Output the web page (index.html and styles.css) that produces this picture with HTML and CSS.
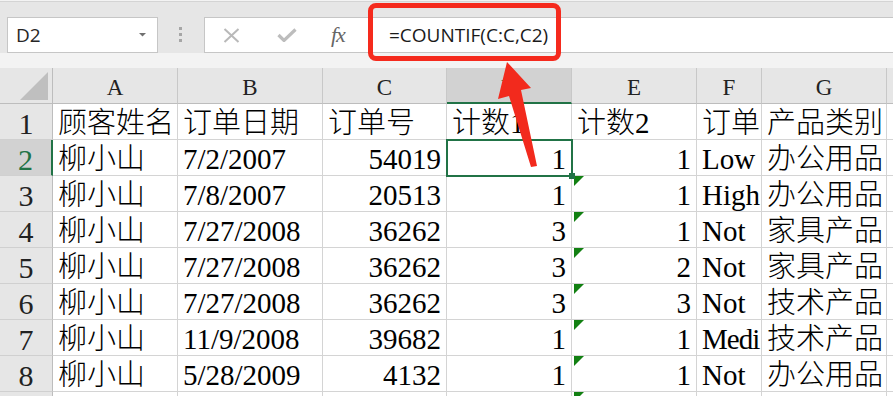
FILE: index.html
```html
<!DOCTYPE html>
<html lang="zh-CN">
<head>
<meta charset="utf-8">
<title>COUNTIF</title>
<link rel="stylesheet" href="styles.css">
</head>
<body>
<div class="app">
  <div class="topband"></div>
  <div class="fbar">
    <div class="namebox"><span>D2</span>
      <svg width="8" height="4" viewBox="0 0 8 4"><path d="M0 0H7L3.5 3.5Z" fill="#707070"/></svg>
    </div>
    <div class="grip">
      <svg width="4" height="16" viewBox="0 0 4 16"><rect x="0" y="0" width="3" height="3" fill="#a6a6a6"/><rect x="0" y="6" width="3" height="3" fill="#a6a6a6"/><rect x="0" y="12" width="3" height="3" fill="#a6a6a6"/></svg>
    </div>
    <div class="formula">
      <div class="fbtns">
        <svg class="ico" width="17" height="15" viewBox="0 0 17 15"><path d="M1.5 1L15.5 14M15.5 1L1.5 14" stroke="#b9b9b9" stroke-width="2" fill="none"/></svg>
        <svg class="ico" width="20" height="14" viewBox="0 0 20 14"><path d="M1.5 7L7 12.5L18.5 1.5" stroke="#bdbdbd" stroke-width="3.2" fill="none"/></svg>
        <span class="fx">fx</span>
      </div>
      <div class="ftext">=COUNTIF(C:C,C2)</div>
    </div>
  </div>
  <div class="gap"></div>

  <div class="sheet">
    <div class="corner"><svg width="29" height="28" viewBox="0 0 29 28"><path d="M0 28L28 0V28Z" fill="#bfbfbf"/></svg></div>
    <div class="ch">A</div><div class="ch">B</div><div class="ch">C</div><div class="ch on">D</div><div class="ch">E</div><div class="ch">F</div><div class="ch">G</div><div class="ch last"></div>

    <div class="rh">1</div>
    <div class="c">顾客姓名</div><div class="c">订单日期</div><div class="c">订单号</div><div class="c">计数1</div><div class="c">计数2</div><div class="c">订单</div><div class="c">产品类别</div><div class="c"></div>

    <div class="rh on">2</div>
    <div class="c">柳小山</div><div class="c">7/2/2007</div><div class="c n">54019</div><div class="c n sel">1</div><div class="c n">1</div><div class="c">Low</div><div class="c">办公用品</div><div class="c"></div>

    <div class="rh">3</div>
    <div class="c">柳小山</div><div class="c">7/8/2007</div><div class="c n">20513</div><div class="c n">1</div><div class="c n err">1</div><div class="c">High</div><div class="c">办公用品</div><div class="c"></div>

    <div class="rh">4</div>
    <div class="c">柳小山</div><div class="c">7/27/2008</div><div class="c n">36262</div><div class="c n">3</div><div class="c n err">1</div><div class="c">Not</div><div class="c">家具产品</div><div class="c"></div>

    <div class="rh">5</div>
    <div class="c">柳小山</div><div class="c">7/27/2008</div><div class="c n">36262</div><div class="c n">3</div><div class="c n err">2</div><div class="c">Not</div><div class="c">家具产品</div><div class="c"></div>

    <div class="rh">6</div>
    <div class="c">柳小山</div><div class="c">7/27/2008</div><div class="c n">36262</div><div class="c n">3</div><div class="c n err">3</div><div class="c">Not</div><div class="c">技术产品</div><div class="c"></div>

    <div class="rh">7</div>
    <div class="c">柳小山</div><div class="c">11/9/2008</div><div class="c n">39682</div><div class="c n">1</div><div class="c n err">1</div><div class="c tight">Medi</div><div class="c">技术产品</div><div class="c"></div>

    <div class="rh">8</div>
    <div class="c">柳小山</div><div class="c">5/28/2009</div><div class="c n">4132</div><div class="c n">1</div><div class="c n err">1</div><div class="c">Not</div><div class="c">办公用品</div><div class="c"></div>

    <div class="rh"></div>
    <div class="c"></div><div class="c"></div><div class="c"></div><div class="c"></div><div class="c n err"></div><div class="c"></div><div class="c"></div><div class="c"></div>
  </div>

  <!-- annotation -->
  <div class="callout"></div>
  <svg class="arrow" width="893" height="396" viewBox="0 0 893 396">
    <path d="M507 62L531 88L521 90L537 166L531 167L509 96L498 99Z" fill="#f22a1d"/>
  </svg>
</div>
</body>
</html>
```

FILE: styles.css
```css
body {
  margin: 0;
  background: #e6e6e6;
  overflow: hidden;
}
.app {
  position: relative;
  width: 893px;
  height: 396px;
  overflow: hidden;
  padding-top: 1px;
  box-sizing: border-box;
  background: #f3f3f3;
  font-family: "Open Sans", "Noto Sans", sans-serif;
}
.topband {
  height: 15px;
  border-top: 1px solid #d4d4d4;
  background: #e6e6e6;
}
.fbar {
  display: flex;
  height: 36px;
  background: #e6e6e6;
}
.namebox {
  margin-left: 7px;
  width: 151px;
  box-sizing: border-box;
  background: #fff;
  border: 1px solid #c6c6c6;
  display: flex;
  align-items: center;
  justify-content: space-between;
  padding: 0 10px 0 8px;
  font-size: 19px;
  color: #262626;
}
.grip {
  width: 46px;
  display: flex;
  align-items: center;
  justify-content: center;
}
.formula {
  flex: 1;
  display: flex;
  align-items: center;
  background: #fff;
  border: 1px solid #c6c6c6;
  border-right: none;
}
.fbtns {
  width: 163px;
  display: flex;
  align-items: center;
  padding-left: 18px;
  box-sizing: border-box;
}
.fbtns .ico {
  margin-right: 37px;
}
.fbtns svg.ico:nth-child(2) {
  margin-right: 34px;
}
.fx {
  font-family: "Liberation Serif", serif;
  font-style: italic;
  font-size: 22px;
  color: #666;
  letter-spacing: -1px;
}
.ftext {
  padding-left: 21px;
  font-size: 19px;
  color: #1a1a1a;
}
.gap {
  height: 15px;
}
.sheet {
  display: grid;
  grid-template-columns: 53px 125px 145px 124px 125px 125px 65px 125px 1fr;
  grid-auto-rows: 36px;
  background: #fff;
}
.corner {
  background: #e6e6e6;
  border-right: 1px solid #bdbdbd;
  border-bottom: 1px solid #bdbdbd;
  display: flex;
  align-items: flex-end;
  justify-content: flex-end;
  padding: 0 3px 3px 0;
}
.ch {
  background: #e6e6e6;
  border-right: 1px solid #c8c8c8;
  border-bottom: 1px solid #bdbdbd;
  display: flex;
  align-items: flex-end;
  justify-content: center;
  font-family: "Liberation Serif", serif;
  font-size: 23px;
  line-height: 23px;
  padding-bottom: 4px;
  color: #222;
}
.ch.on {
  background: #d2d2d2;
  border-bottom: 2px solid #217346;
  color: #217346;
  padding-bottom: 3px;
}
.rh {
  background: #e6e6e6;
  border-right: 1px solid #bdbdbd;
  border-bottom: 1px solid #d0d0d0;
  display: flex;
  align-items: flex-end;
  justify-content: center;
  font-family: "Liberation Serif", serif;
  font-size: 30px;
  line-height: 30px;
  color: #222;
}
.rh.on {
  background: #d2d2d2;
  border-right: 2px solid #217346;
  color: #217346;
}
.c {
  position: relative;
  border-right: 1px solid #d4d4d4;
  border-bottom: 1px solid #d4d4d4;
  overflow: hidden;
  white-space: nowrap;
  display: flex;
  align-items: flex-end;
  padding: 0 5px 1px 5px;
  font-family: "Liberation Serif", "Noto Sans CJK SC", serif;
  font-weight: 300;
  font-size: 29px;
  line-height: 29px;
  color: #000;
}
.c.n {
  justify-content: flex-end;
}
.c.tight {
  letter-spacing: -1px;
  padding-right: 0;
}
.c.sel {
  overflow: visible;
  outline: 2px solid #217346;
  outline-offset: -1px;
  z-index: 2;
}
.c.sel::after {
  content: "";
  position: absolute;
  right: -4px;
  bottom: -4px;
  width: 6px;
  height: 6px;
  background: #217346;
}
.c.err::before {
  content: "";
  position: absolute;
  left: 2px;
  top: 0;
  border-top: 10px solid #128012;
  border-right: 10px solid transparent;
}
.callout {
  position: absolute;
  left: 368px;
  top: 3px;
  width: 193px;
  height: 58px;
  box-sizing: border-box;
  border: 5px solid #f52a1d;
  border-radius: 8px;
  z-index: 3;
}
.arrow {
  position: absolute;
  left: 0;
  top: 0;
  z-index: 4;
}
```
